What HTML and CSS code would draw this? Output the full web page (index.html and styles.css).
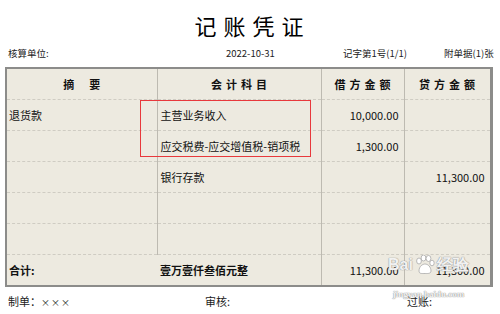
FILE: index.html
```html
<!DOCTYPE html>
<html lang="zh">
<head>
<meta charset="utf-8">
<link rel="stylesheet" href="styles.css">
</head>
<body>
<div class="page">
  <h1 class="title">记账凭证</h1>
  <div class="info">
    <span class="info-unit">核算单位:</span>
    <span class="info-date">2022-10-31</span>
    <span class="info-no">记字第1号(1/1)</span>
    <span class="info-att">附单据(1)张</span>
  </div>
  <div class="voucher">
    <table class="grid">
      <colgroup>
        <col class="c1"><col class="c2"><col class="c3"><col class="c4">
      </colgroup>
      <thead>
        <tr>
          <th>摘<span class="gap"></span>要</th>
          <th>会计科目</th>
          <th>借方金额</th>
          <th>贷方金额</th>
        </tr>
      </thead>
      <tbody>
        <tr><td>退货款</td><td class="acct">主营业务收入</td><td class="num">10,000.00</td><td class="num"></td></tr>
        <tr><td></td><td class="acct">应交税费-应交增值税-销项税</td><td class="num">1,300.00</td><td class="num"></td></tr>
        <tr><td></td><td class="acct">银行存款</td><td class="num"></td><td class="num">11,300.00</td></tr>
        <tr><td></td><td></td><td></td><td></td></tr>
        <tr><td></td><td></td><td></td><td></td></tr>
        <tr class="total"><td class="total-label">合计:</td><td class="acct total-cn">壹万壹仟叁佰元整</td><td class="num">11,300.00</td><td class="num">11,300.00</td></tr>
      </tbody>
    </table>
    <div class="highlight"></div>
    <div class="watermark">
      <div class="wm-row">
        <span class="wm-big">Bai</span>
        <svg class="wm-paw" width="22" height="20" viewBox="0 0 22 20">
          <g fill="#ffffff" stroke="#a8a8a8" stroke-width="0.8">
            <ellipse cx="5" cy="6" rx="2.4" ry="3"/>
            <ellipse cx="9.5" cy="3" rx="2.4" ry="3"/>
            <ellipse cx="14.5" cy="3.5" rx="2.4" ry="3"/>
            <ellipse cx="18" cy="8" rx="2.2" ry="2.8"/>
            <path d="M5 16 C5 11 9 9 11 9 C14 9 17 12 17 16 C17 19 13 18.5 11 18.5 C8 18.5 5 19 5 16 Z"/>
          </g>
        </svg>
        <span class="wm-big">经验</span>
      </div>
      <span class="wm-small">jingyan.baidu.com</span>
    </div>
  </div>
  <div class="footer">
    <span class="f-maker">制单：<span class="xs">×××</span></span>
    <span class="f-check">审核:</span>
    <span class="f-post">过账:</span>
  </div>
</div>
</body>
</html>
```
FILE: styles.css
```css
html, body {
  margin: 0;
  padding: 0;
  background: #ffffff;
}
body {
  font-family: "Noto Sans CJK SC", "Noto Sans", sans-serif;
  color: #111;
  width: 500px;
  height: 314px;
  overflow: hidden;
}
.page {
  width: 500px;
}
.title {
  margin: 0;
  padding-top: 10px;
  height: 30px;
  line-height: 30px;
  font-size: 22px;
  font-weight: normal;
  text-align: center;
  letter-spacing: 7px;
  text-indent: 5px;
  color: #000;
}
.info {
  margin-top: 5px;
  height: 16px;
  line-height: 16px;
  font-size: 9.5px;
  color: #222;
  display: flex;
  padding-left: 8px;
}
.info-unit { width: 218px; }
.info-date { width: 117px; }
.info-no { width: 101px; }
.info-att { width: 50px; }
.voucher {
  position: relative;
  margin: 6px 0 0 5px;
  width: 487px;
}
.grid {
  width: 487px;
  table-layout: fixed;
  border-collapse: collapse;
  background: #edeae0;
  border: 2px solid #8c8c8a;
  border-right-width: 3px;
  border-bottom-width: 2px;
}
.c1 { width: 151px; }
.c2 { width: 164px; }
.c3 { width: 83px; }
.c4 { width: 87px; }
th, td {
  height: 30px;
  padding: 0;
  font-size: 11px;
  border-right: 1px solid #bdbab1;
  border-bottom: 1px dashed #cfccc3;
  white-space: nowrap;
  overflow: hidden;
}
th {
  font-weight: bold;
  letter-spacing: 4px;
  text-indent: 4px;
  text-align: center;
  color: #111;
}
.gap {
  display: inline-block;
  width: 11px;
}
td {
  padding-left: 2px;
}
td.acct {
  padding-left: 3px;
}
td.num {
  text-align: right;
  padding-right: 5px;
  padding-left: 0;
}
.total td {
  font-weight: bold;
  border-bottom: none;
  height: 30px;
}
.total td.num {
  font-weight: normal;
}
.total td.total-label {
  border-right: none;
}
.highlight {
  position: absolute;
  left: 135px;
  top: 33px;
  width: 171px;
  height: 57px;
  border: 1.5px solid #e8393c;
  box-sizing: border-box;
}
.watermark {
  position: absolute;
  left: 376px;
  top: 188px;
  width: 95px;
  display: flex;
  flex-direction: column;
  align-items: center;
  color: rgba(255, 255, 255, 0.9);
  text-shadow: 0 0 1px #8f8f8f, 0 0 1px #8f8f8f;
  pointer-events: none;
}
.wm-row {
  display: flex;
  align-items: center;
  gap: 1px;
}
.wm-big {
  font-family: "Liberation Sans", sans-serif;
  font-size: 16px;
  font-weight: bold;
  line-height: 18px;
}
.wm-small {
  margin-top: 14px;
  font-family: "Liberation Serif", serif;
  font-size: 9px;
  line-height: 11px;
  font-weight: bold;
}
.footer {
  display: flex;
  padding-left: 8px;
  margin-top: 6px;
  height: 16px;
  line-height: 16px;
  font-size: 11px;
  color: #222;
}
.xs {
  font-size: 9px;
  letter-spacing: 1px;
}
.f-maker { width: 197px; }
.f-check { width: 202px; }
.f-post { width: 60px; }
```
